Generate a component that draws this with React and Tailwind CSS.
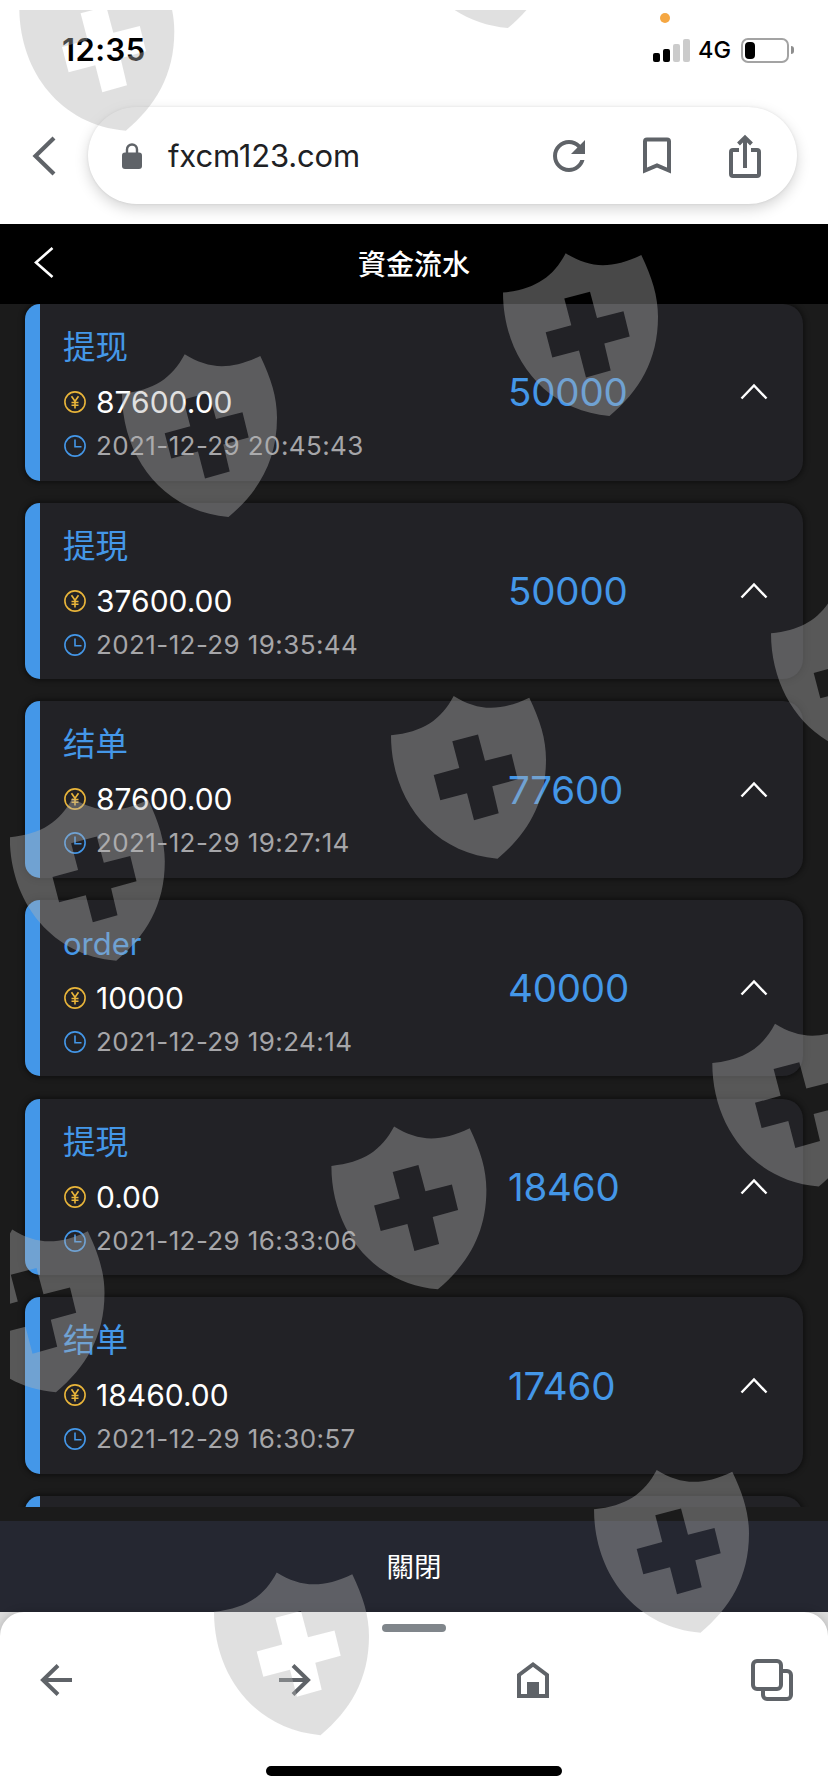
import React from 'react';
import clsx from 'clsx';

const records = [
    { id: 1, type: '提现', balance: '87600.00', time: '2021-12-29 20:45:43', amount: '50000' },
    { id: 2, type: '提現', balance: '37600.00', time: '2021-12-29 19:35:44', amount: '50000' },
    { id: 3, type: '结单', balance: '87600.00', time: '2021-12-29 19:27:14', amount: '77600' },
    { id: 4, type: 'order', balance: '10000', time: '2021-12-29 19:24:14', amount: '40000' },
    { id: 5, type: '提現', balance: '0.00', time: '2021-12-29 16:33:06', amount: '18460' },
    { id: 6, type: '结单', balance: '18460.00', time: '2021-12-29 16:30:57', amount: '17460' },
];

// Top left corner of every shield stamp
const shields = [
    [19.3, -32], [401.5, -134.7], [503, 253.3], [122, 354.3], [771, 594], [391, 696],
    [9.8, 798], [712.3, 1023.8], [331.4, 1126.6], [-50.5, 1229.5], [594, 1470], [214, 1572.5],
];

const Watermark = () => (
    <svg className="absolute inset-0 pointer-events-none" width="828" height="1792" viewBox="0 0 828 1792">
        <clipPath id="page-margin">
            <rect x="10" y="10" width="818" height="1782" />
        </clipPath>
        <g clipPath="url(#page-margin)" fill="#b2b2b2" fillOpacity="0.404" fillRule="evenodd">
            {shields.map(([x, y]) => (
                <path
                    key={`${x}-${y}`}
                    transform={`translate(${x} ${y})`}
                    d="M0 39.3C32 36 50 24 62.7 0C87 15 108 16 138.3 1.7C149 24 155 43 155 63.500C155 107 136 138 106.500 162.700C40 157 0 102 0 39.300Z M61.300 45.300L87 38.500L94 64.700L120.500 58L126.700 83.300L101.300 90.300L107.700 117.300L83 124.300L76 97.300L49.300 104.300L42.700 79L68.300 72Z"
                />
            ))}
        </g>
    </svg>
);

const StatusBar = () => (
    <div className="h-[90px] flex items-start justify-between pl-[62px] pr-[34px]">
        <span className="mt-[30px] text-[31px] leading-[40px] font-semibold text-black tracking-[0.4px]">12:35</span>
        <div className="relative mt-[30px] h-[40px] flex items-center">
            <span className="absolute left-[7px] -top-[17px] size-[10px] rounded-full bg-[#f5a742]"></span>
            <div className="flex items-end gap-[3px] h-[24px]">
                <span className="w-[7px] h-[9px] rounded-[2px] bg-black"></span>
                <span className="w-[7px] h-[13px] rounded-[2px] bg-black"></span>
                <span className="w-[7px] h-[18px] rounded-[2px] bg-[#cbcbcb]"></span>
                <span className="w-[7px] h-[23px] rounded-[2px] bg-[#cbcbcb]"></span>
            </div>
            <span className="ml-[8px] w-[43px] text-[23.500px] leading-[30px] font-medium text-black">4G</span>
            <div className="w-[48px] h-[25px] rounded-[7px] border-2 border-[#a3a3a3] p-[2px]">
                <div className="w-[10px] h-[17px] rounded-[4px] bg-black"></div>
            </div>
            <span className="ml-[2px] w-[3px] h-[8px] rounded-r-full bg-[#8e8e8e]"></span>
        </div>
    </div>
);

const AddressBar = () => (
    <div className="h-[134px] flex items-start pt-[17px]">
        <svg className="w-[88px] h-[97px]" viewBox="0 0 88 97" fill="none" stroke="#5f6368" strokeWidth="4.200">
            <path d="M54 31L35.500 49L54 67" />
        </svg>
        <div className="w-[709px] h-[97px] rounded-full bg-white flex items-center pl-[34px] pr-[28px] shadow-[0_5px_14px_rgba(0,0,0,0.17),0_0_3px_rgba(0,0,0,0.08)]">
            <svg width="20" height="26" viewBox="0 0 20 26">
                <path d="M5 11V6.500a5 5 0 0 1 10 0V11" fill="none" stroke="#5f6368" strokeWidth="2.400" />
                <rect y="9.500" width="20" height="16.500" rx="3" fill="#5f6368" />
            </svg>
            <span className="ml-[26px] flex-1 text-[31px] leading-[40px] tracking-[-0.150px] text-[#202124]">fxcm123.com</span>
            <svg width="48" height="48" viewBox="0 0 24 24" fill="#5f6368">
                <path d="M17.650 6.350C16.200 4.900 14.210 4 12 4c-4.420 0-7.990 3.580-7.990 8s3.570 8 7.990 8c3.730 0 6.840-2.550 7.730-6h-2.080c-.82 2.330-3.040 4-5.650 4-3.310 0-6-2.690-6-6s2.690-6 6-6c1.660 0 3.140.69 4.220 1.780L13 11h7V4l-2.350 2.350z" />
            </svg>
            <svg className="ml-[40px]" width="48" height="48" viewBox="0 0 48 48" fill="none" stroke="#5f6368" strokeWidth="4">
                <path d="M12 38.500V9.500a2 2 0 0 1 2-2h20a2 2 0 0 1 2 2v29L24 33.500z" />
            </svg>
            <svg className="ml-[40px]" width="48" height="48" viewBox="0 0 48 48" fill="none" stroke="#5f6368" strokeWidth="4">
                <path d="M18 18h-6a2 2 0 0 0-2 2v22a2 2 0 0 0 2 2h24a2 2 0 0 0 2-2V20a2 2 0 0 0-2-2h-6" />
                <path d="M24 36V6M17.500 12l6.500-6.500L30.500 12" />
            </svg>
        </div>
    </div>
);

const YenIcon = () => (
    <svg width="22" height="22" viewBox="0 0 22 22" fill="none" stroke="#e9b53a" strokeWidth="1.600">
        <circle cx="11" cy="11" r="10.100" />
        <path d="M7.500 5.200L11 10.300L14.500 5.200M11 10.300V17.500M7.500 11.500h7M7.500 14.200h7" />
    </svg>
);

const ClockIcon = () => (
    <svg width="22" height="22" viewBox="0 0 22 22" fill="none" stroke="#4497e8" strokeWidth="1.600">
        <circle cx="11" cy="11" r="10.100" />
        <path d="M11 4.500V11.700h6.500" />
    </svg>
);

const RecordCard = ({ record }) => (
    <div className="h-[176.500px] shrink-0 flex items-stretch rounded-l-[15px] rounded-r-[20px] border-l-[15px] border-[#4497e8] bg-[#222226] shadow-[0_0_5px_2px_rgba(0,0,0,0.4)]">
        <div className="w-[468px] pl-[24px] pt-[24px]">
            <div
                className={clsx(
                    'h-[40px] -ml-px leading-[40px] text-[#4497e8]',
                    record.type === 'order' ? 'text-[31px]' : 'text-[32.500px]'
                )}
            >
                {record.type}
            </div>
            <div className="mt-[12px] h-[44px] flex items-center gap-[10px]">
                <YenIcon />
                <span className="text-[30px] leading-[44px] text-white">{record.balance}</span>
            </div>
            <div className="h-[44px] flex items-center gap-[10px]">
                <ClockIcon />
                <span className="text-[26px] leading-[44px] tracking-[0.400px] text-[#a6a6a9]">{record.time}</span>
            </div>
        </div>
        <div className="flex-1 flex items-center justify-between pr-[34px]">
            <span className="text-[38.500px] leading-[48px] tracking-[-0.200px] text-[#4497e8]">{record.amount}</span>
            <svg className="mb-[2px]" width="30" height="20" viewBox="0 0 30 20" fill="none" stroke="#fff" strokeWidth="2.400">
                <path d="M2.500 17.500L15 4.500L27.500 17.500" />
            </svg>
        </div>
    </div>
);

const BottomBar = () => (
    <div className="h-[180px] bg-[#dcdcdc]">
        <div className="h-full rounded-t-[24px] bg-white flex flex-col items-center shadow-[0_0_10px_rgba(0,0,0,0.2)]">
            <span className="mt-[12px] w-[64px] h-[8px] rounded-full bg-[#80868b]"></span>
            <div className="mt-[24px] w-full px-[32px] flex items-center justify-between">
                <svg width="48" height="48" viewBox="0 0 48 48" fill="none" stroke="#5f6368" strokeWidth="4">
                    <path d="M40 24H11M26 9.500L11 24L26 38.500" />
                </svg>
                <svg width="48" height="48" viewBox="0 0 48 48" fill="none" stroke="#5f6368" strokeWidth="4">
                    <path d="M8 24H37M22 9.500L37 24L22 38.500" />
                </svg>
                <svg width="48" height="48" viewBox="0 0 48 48" fill="none" stroke="#5f6368" strokeWidth="4">
                    <path d="M10 40V19L24 8.500L38 19V40z" />
                    <path d="M18 26h12v14H18z" fill="#5f6368" stroke="none" />
                </svg>
                <svg width="48" height="48" viewBox="0 0 48 48" fill="none" stroke="#5f6368" strokeWidth="4">
                    <rect x="5" y="5" width="28" height="28" rx="4" />
                    <path d="M34 15h5a4 4 0 0 1 4 4v20a4 4 0 0 1-4 4H19a4 4 0 0 1-4-4v-5" />
                </svg>
            </div>
            <span className="mt-[62px] w-[296px] h-[10px] rounded-full bg-black"></span>
        </div>
    </div>
);

const App = () => {
    return (
        <div className="relative w-[828px] h-[1792px] overflow-hidden flex flex-col bg-white font-[Inter,'Noto_Sans_CJK_SC',sans-serif]">
            <StatusBar />
            <AddressBar />

            {/* Page header */}
            <div className="h-[80px] shrink-0 bg-black grid grid-cols-[88px_1fr_88px] items-center">
                <svg width="88" height="80" viewBox="0 0 88 80" fill="none" stroke="#fff" strokeWidth="2.600">
                    <path d="M52.500 24L36 38.500L52.500 53" />
                </svg>
                <h1 className="pb-[3px] text-center text-[28px] leading-[40px] font-medium text-white font-['Noto_Sans_CJK_TC',sans-serif]">資金流水</h1>
            </div>

            {/* Records */}
            <div className="h-[1203px] shrink-0 overflow-hidden bg-[#1b1b1b] pl-[25px] pr-[25px] flex flex-col gap-[22.170px]">
                {records.map((record) => (
                    <RecordCard key={record.id} record={record} />
                ))}
                <div className="h-[176px] shrink-0 rounded-l-[15px] rounded-r-[20px] border-l-[15px] border-[#4497e8] bg-[#222226] shadow-[0_0_5px_2px_rgba(0,0,0,0.4)]"></div>
            </div>
            <div className="h-[14px] shrink-0 bg-[#1b1b1b]"></div>

            <button className="h-[91px] shrink-0 pb-[4px] bg-[#252731] text-white text-[27.500px] leading-[40px] font-['Noto_Sans_CJK_TC',sans-serif]">關閉</button>
            <BottomBar />
            <Watermark />
        </div>
    );
};

export default App;
